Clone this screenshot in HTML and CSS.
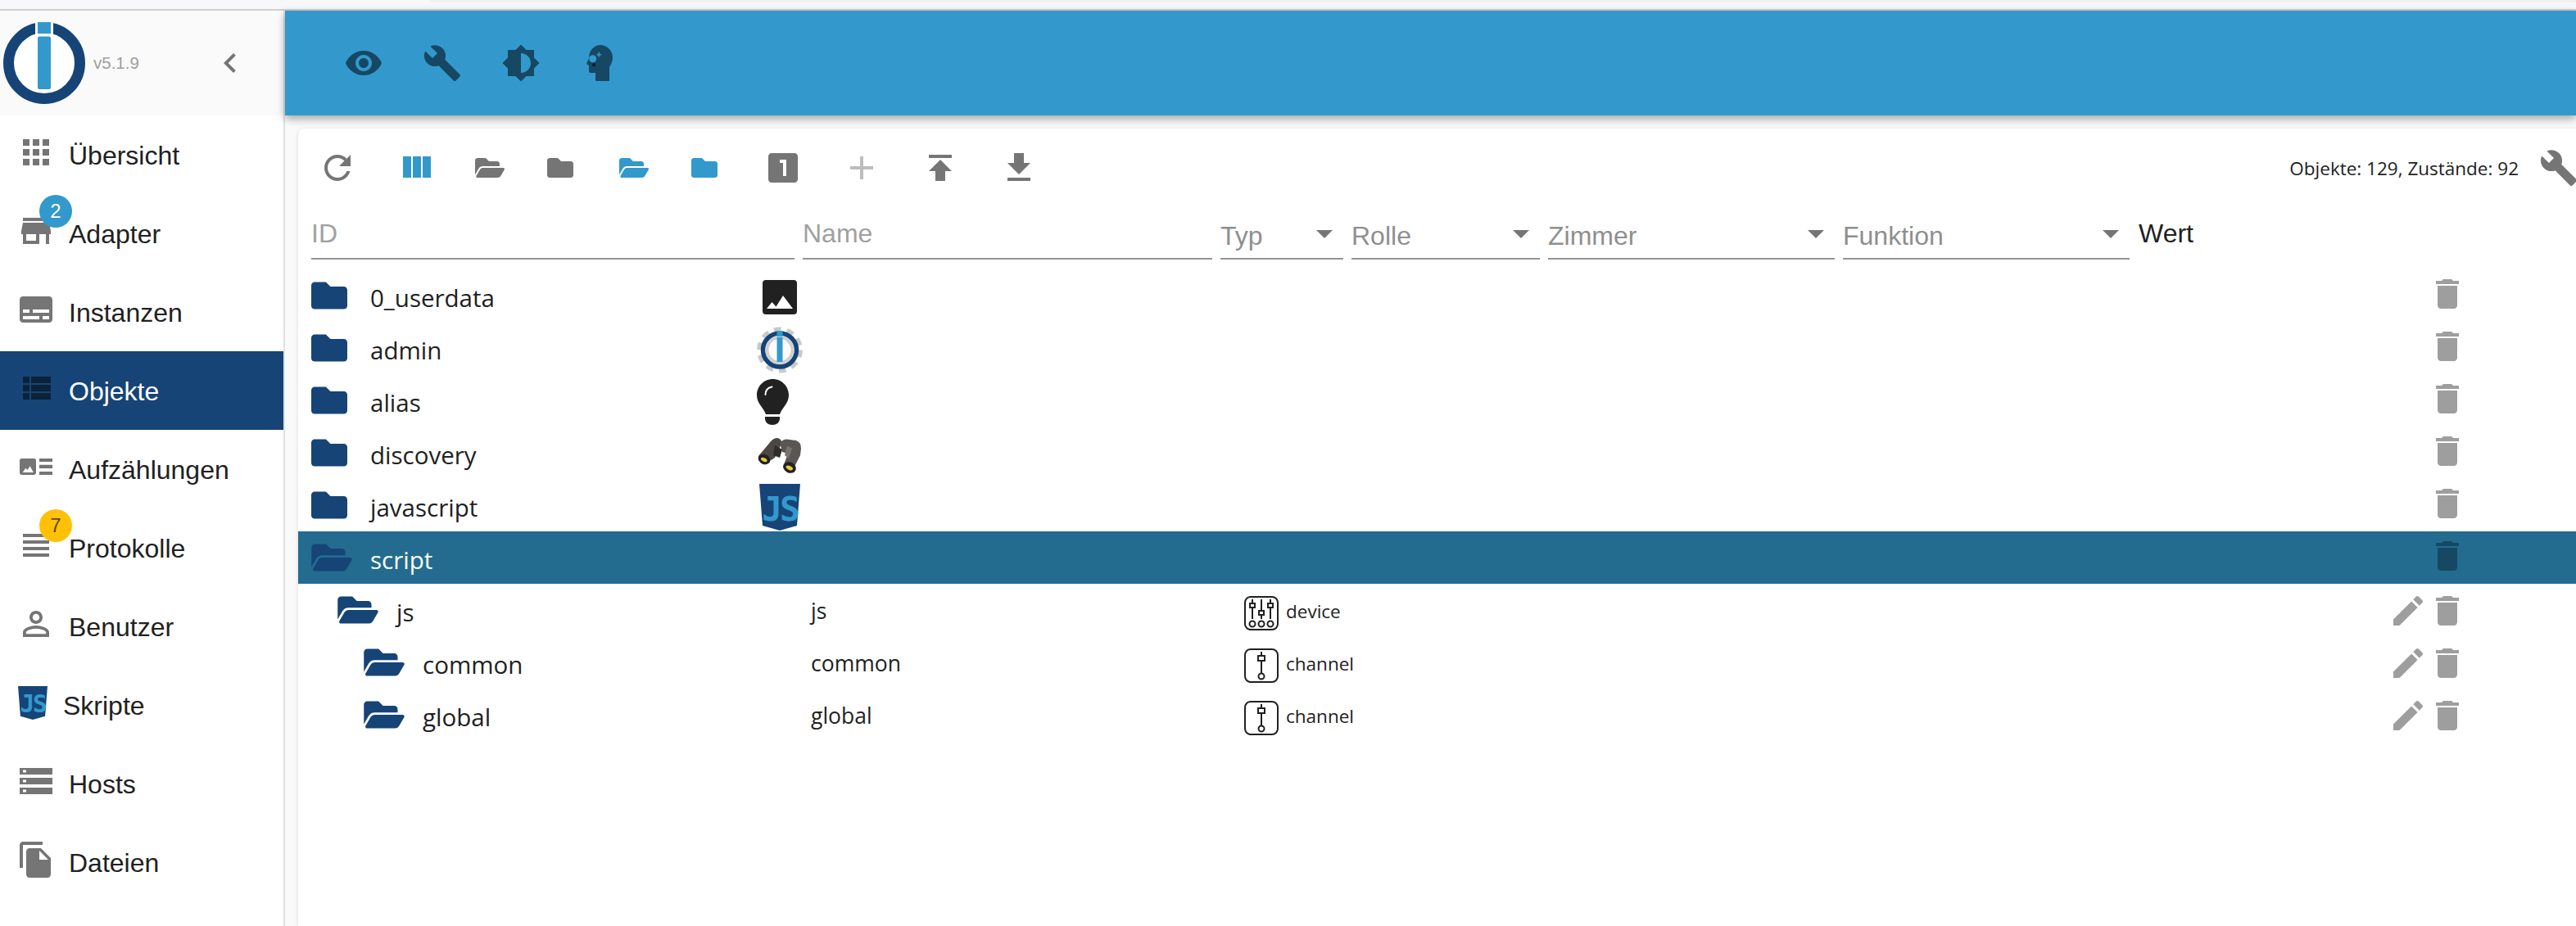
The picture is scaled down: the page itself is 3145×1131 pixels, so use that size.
FILE: index.html
```html
<!DOCTYPE html>
<html lang="de">
<head>
<meta charset="utf-8">
<title>ioBroker Objekte</title>
<link rel="stylesheet" href="styles.css">
</head>
<body>
<svg class="defs" width="0" height="0" aria-hidden="true">
  <defs>
    <path id="p-folder" d="M464 128H272l-64-64H48C21.49 64 0 85.49 0 112v288c0 26.51 21.49 48 48 48h416c26.51 0 48-21.49 48-48V176c0-26.51-21.49-48-48-48z"/>
    <path id="p-open" d="M572.694 292.093L500.27 416.248A63.997 63.997 0 0 1 444.989 448H45.025c-18.523 0-30.064-20.093-20.731-36.093l72.424-124.155A64 64 0 0 1 152 256h399.964c18.523 0 30.064 20.093 20.73 36.093zM152 224h328v-48c0-26.51-21.49-48-48-48H272l-64-64H48C21.49 64 0 85.49 0 112v278.046l69.077-118.418C86.214 242.25 117.989 224 152 224z"/>
    <path id="p-trash" d="M6 19c0 1.1.9 2 2 2h8c1.1 0 2-.9 2-2V7H6v12zM19 4h-3.5l-1-1h-5l-1 1H5v2h14V4z"/>
    <path id="p-edit" d="M3 17.25V21h3.75L17.81 9.94l-3.75-3.75L3 17.25zM20.71 7.04c.39-.39.39-1.02 0-1.41l-2.34-2.34c-.39-.39-1.02-.39-1.41 0l-1.83 1.83 3.75 3.75 1.83-1.83z"/>
    <path id="p-wrench" d="M22.7 19l-9.1-9.1c.9-2.3.4-5-1.5-6.9-2-2-5-2.4-7.4-1.3L9 6 6 9 1.6 4.7C.4 7.1.9 10.1 2.9 12.1c1.9 1.9 4.6 2.4 6.9 1.5l9.1 9.1c.4.4 1 .4 1.4 0l2.3-2.3c.5-.4.5-1.1.1-1.4z"/>
  </defs>
</svg>

<div class="browser-strip"><div class="browser-tab"></div></div>

<div class="app">
  <aside class="sidebar">
    <div class="brand">
      <svg class="logo" viewBox="0 0 100 100" width="100" height="100">
        <circle cx="50" cy="50" r="43.5" fill="#fff" stroke="#164477" stroke-width="13"/>
        <rect x="39" y="0" width="22" height="16" fill="#fafafa"/>
        <rect x="42" y="0" width="16" height="14" fill="#3399cc"/>
        <rect x="42" y="17.500" width="16" height="64.500" rx="2" fill="#3399cc"/>
      </svg>
      <span class="version">v5.1.9</span>
      <svg class="chevron" viewBox="0 0 24 24" width="48" height="48"><path d="M15.41 7.41L14 6l-6 6 6 6 1.41-1.41L10.83 12z"/></svg>
    </div>
    <nav class="menu">
      <div class="item">
        <svg class="nav-icon" viewBox="0 0 24 24"><path d="M4 8h4V4H4v4zm6 12h4v-4h-4v4zm-6 0h4v-4H4v4zm0-6h4v-4H4v4zm6 0h4v-4h-4v4zm6-10v4h4V4h-4zm-6 4h4V4h-4v4zm6 6h4v-4h-4v4zm0 6h4v-4h-4v4z"/></svg>
        <span>Übersicht</span>
      </div>
      <div class="item">
        <svg class="nav-icon" viewBox="0 0 24 24"><path d="M20 4H4v2h16V4zm1 10v-2l-1-5H4l-1 5v2h1v6h10v-6h4v6h2v-6h1zm-9 4H6v-4h6v4z"/></svg>
        <span>Adapter</span>
        <b class="badge badge-blue">2</b>
      </div>
      <div class="item">
        <svg class="nav-icon" viewBox="0 0 24 24"><path d="M20 4H4c-1.100 0-2 .9-2 2v12c0 1.100.9 2 2 2h16c1.100 0 2-.9 2-2V6c0-1.100-.9-2-2-2zM4 12h4v2H4v-2zm10 6H4v-2h10v2zm6 0h-4v-2h4v2zm0-4H10v-2h10v2z"/></svg>
        <span>Instanzen</span>
      </div>
      <div class="item item-active">
        <svg class="nav-icon" viewBox="0 0 24 24"><path d="M4 14h4v-4H4v4zm0 5h4v-4H4v4zM4 9h4V5H4v4zm5 5h12v-4H9v4zm0 5h12v-4H9v4zM9 5v4h12V5H9z"/></svg>
        <span>Objekte</span>
      </div>
      <div class="item">
        <svg class="nav-icon" viewBox="0 0 24 24"><path fill-rule="evenodd" d="M3.200 7h7.600A1.200 1.200 0 0 1 12 8.200v7.600a1.200 1.200 0 0 1-1.200 1.200H3.200A1.200 1.200 0 0 1 2 15.800V8.200A1.200 1.200 0 0 1 3.200 7zM3.800 15.500h6.600L8.300 11.600 6.800 14 5.700 12.900z"/><path d="M14 7h8v2h-8zM14 10.900h8v2.100h-8zM14 15h8v2h-8z"/></svg>
        <span>Aufzählungen</span>
      </div>
      <div class="item">
        <svg class="nav-icon" viewBox="0 0 24 24"><path d="M4 5h16v2H4zM4 9h16v2H4zM4 13h16v2H4zM4 17h16v2H4z"/></svg>
        <span>Protokolle</span>
        <b class="badge badge-amber">7</b>
      </div>
      <div class="item">
        <svg class="nav-icon" viewBox="0 0 24 24"><path d="M12 5.900c1.160 0 2.100.94 2.100 2.100s-.94 2.100-2.100 2.100S9.900 9.160 9.900 8s.94-2.100 2.100-2.100m0 9c2.970 0 6.100 1.460 6.100 2.100v1.100H5.900V17c0-.64 3.130-2.100 6.100-2.100M12 4C9.790 4 8 5.790 8 8s1.790 4 4 4 4-1.790 4-4-1.790-4-4-4zm0 9c-2.670 0-8 1.340-8 4v3h16v-3c0-2.660-5.330-4-8-4z"/></svg>
        <span>Benutzer</span>
      </div>
      <div class="item item-js">
        <svg class="js-icon js-small" viewBox="0 0 50 57"><path class="shield" d="M0 0h50l-4 51-21 6-21-6z"/><text x="25" y="45" text-anchor="middle" class="js-text">JS</text></svg>
        <span>Skripte</span>
      </div>
      <div class="item">
        <svg class="nav-icon" viewBox="0 0 24 24"><path fill-rule="evenodd" d="M2 4h20v4H2zM4 5.300v1.400h2V5.300zM2 10h20v4H2zM4 11.300v1.400h2v-1.400zM2 16h20v4H2zM4 17.300v1.400h2v-1.400z"/></svg>
        <span>Hosts</span>
      </div>
      <div class="item">
        <svg class="nav-icon" viewBox="0 0 24 24"><path d="M16 1H4c-1.100 0-2 .9-2 2v14h2V3h12V1zm-1 4l6 6v10c0 1.100-.9 2-2 2H7.990C6.890 23 6 22.100 6 21l.01-14c0-1.100.89-2 1.990-2h7zm-1 7h5.500L14 6.500V12z"/></svg>
        <span>Dateien</span>
      </div>
    </nav>
  </aside>

  <main class="content">
    <header class="appbar">
      <button class="bar-btn"><svg viewBox="0 0 24 24"><path d="M12 4.500C7 4.500 2.730 7.610 1 12c1.730 4.390 6 7.500 11 7.500s9.270-3.110 11-7.500c-1.730-4.390-6-7.500-11-7.500zM12 17c-2.760 0-5-2.240-5-5s2.240-5 5-5 5 2.240 5 5-2.240 5-5 5zm0-8c-1.660 0-3 1.340-3 3s1.340 3 3 3 3-1.340 3-3-1.340-3-3-3z"/></svg></button>
      <button class="bar-btn"><svg viewBox="0 0 24 24"><use href="#p-wrench"/></svg></button>
      <button class="bar-btn"><svg viewBox="0 0 24 24"><path fill-rule="evenodd" d="M20 15.310L23.310 12 20 8.690V4h-4.690L12 .69 8.690 4H4v4.690L.69 12 4 15.310V20h4.690L12 23.310 15.310 20H20v-4.690zM12 18V6c3.310 0 6 2.690 6 6s-2.690 6-6 6z"/></svg></button>
      <button class="bar-btn"><svg viewBox="0 0 48 48"><path d="M20 46a1 1 0 0 1-1-1v-9h-6a2 2 0 0 1-2-2v-7l-3-2 3-7C11 8 18 2 25 2c8 0 15 7 15 15 0 5-2 9-4 12v16a1 1 0 0 1-1 1z"/><circle cx="15.700" cy="18.700" r="4.500" fill="#3399cc"/><path d="M22.500 11h1.600v2h2v1.600h-2v2h-1.600v-2h-2V13h2z" fill="#3399cc"/><circle cx="17" cy="26.300" r="2" fill="#0a2030"/></svg></button>
    </header>

    <section class="paper">
      <div class="toolbar">
        <button class="tool"><svg viewBox="0 0 24 24"><path d="M17.650 6.350C16.200 4.900 14.210 4 12 4c-4.420 0-7.990 3.580-7.990 8s3.570 8 7.990 8c3.730 0 6.840-2.550 7.730-6h-2.080c-.82 2.330-3.040 4-5.650 4-3.310 0-6-2.690-6-6s2.690-6 6-6c1.660 0 3.140.69 4.220 1.780L13 11h7V4l-2.350 2.350z"/></svg></button>
        <button class="tool tool-blue"><svg viewBox="0 0 24 24"><path d="M10 18h5V5h-5v13zm-6 0h5V5H4v13zM16 5v13h5V5h-5z"/></svg></button>
        <button class="tool tool-folder shift-a"><svg class="open-t" viewBox="0 0 576 512"><use href="#p-open"/></svg></button>
        <button class="tool tool-folder shift-b"><svg class="closed-t" viewBox="0 0 512 512"><use href="#p-folder"/></svg></button>
        <button class="tool tool-folder tool-blue shift-a"><svg class="open-t" viewBox="0 0 576 512"><use href="#p-open"/></svg></button>
        <button class="tool tool-folder tool-blue shift-b"><svg class="closed-t" viewBox="0 0 512 512"><use href="#p-folder"/></svg></button>
        <button class="tool"><svg viewBox="0 0 24 24"><path d="M19 3H5c-1.100 0-2 .9-2 2v14c0 1.100.9 2 2 2h14c1.100 0 2-.9 2-2V5c0-1.100-.9-2-2-2zm-5 14h-2V9h-2V7h4v10z"/></svg></button>
        <button class="tool tool-off"><svg viewBox="0 0 24 24"><path d="M19 13h-6v6h-2v-6H5v-2h6V5h2v6h6v2z"/></svg></button>
        <button class="tool"><svg viewBox="0 0 24 24"><path d="M5 4v2h14V4H5zm0 10h4v6h6v-6h4l-7-7-7 7z"/></svg></button>
        <button class="tool"><svg viewBox="0 0 24 24"><path d="M19 9h-4V3H9v6H5l7 7 7-7zM5 18v2h14v-2H5z"/></svg></button>
        <span class="stats">Objekte: 129, Zustände: 92</span>
        <button class="tool-wrench"><svg viewBox="0 0 24 24"><use href="#p-wrench"/></svg></button>
      </div>

      <div class="filters">
        <div class="field w-id"><span>ID</span></div>
        <div class="field w-name"><span>Name</span></div>
        <div class="field select w-typ"><span>Typ</span><i></i></div>
        <div class="field select w-rolle"><span>Rolle</span><i></i></div>
        <div class="field select w-wide"><span>Zimmer</span><i></i></div>
        <div class="field select w-wide"><span>Funktion</span><i></i></div>
        <div class="wert">Wert</div>
      </div>

      <div class="rows">
        <div class="row">
          <div class="cell-id"><svg class="f-closed" viewBox="0 0 512 512"><use href="#p-folder"/></svg><span>0_userdata</span>
            <div class="row-icon"><svg width="42" height="42" viewBox="0 0 42 42"><rect width="42" height="42" rx="4" fill="#212121"/><path d="M5 35l6.500-8 5 5.500L25 19l12 16z" fill="#fff"/></svg></div></div>
          <div></div><div></div>
          <div class="actions"><button class="act"><svg viewBox="0 0 24 24"><use href="#p-trash"/></svg></button></div>
        </div>
        <div class="row">
          <div class="cell-id"><svg class="f-closed" viewBox="0 0 512 512"><use href="#p-folder"/></svg><span>admin</span>
            <div class="row-icon"><svg width="56" height="57" viewBox="0 0 56 57">
              <circle cx="28" cy="28.500" r="23" fill="none" stroke="#c9c9c9" stroke-width="10" stroke-dasharray="8 6.450"/>
              <circle cx="28" cy="28.500" r="21" fill="#dcdcdc"/>
              <circle cx="28" cy="28.500" r="20.500" fill="#fff" stroke="#164477" stroke-width="5.500"/>
              <circle cx="28" cy="28.500" r="15.500" fill="none" stroke="#cfcfcf" stroke-width="4"/>
              <rect x="24.500" y="5" width="7" height="7" fill="#3399cc"/><rect x="24.500" y="13" width="7" height="30" fill="#3399cc"/>
            </svg></div></div>
          <div></div><div></div>
          <div class="actions"><button class="act"><svg viewBox="0 0 24 24"><use href="#p-trash"/></svg></button></div>
        </div>
        <div class="row">
          <div class="cell-id"><svg class="f-closed" viewBox="0 0 512 512"><use href="#p-folder"/></svg><span>alias</span>
            <div class="row-icon"><svg class="bulb" width="39" height="56" viewBox="0 0 39 56"><path d="M19.500 0C30.300 0 39 8.700 39 19.500c0 4.500-1.500 8.100-3.900 11.800C32 36 29.500 39 28 43H11C9.500 39 7 36 3.900 31.300 1.500 27.600 0 24 0 19.500 0 8.700 8.700 0 19.500 0z" fill="#212121"/><path d="M10 46h18v2c0 5-4 8-9 8s-9-3-9-8z" fill="#212121"/><path d="M10.500 19c0-5 3-8.500 8-9.500" fill="none" stroke="#fff" stroke-width="2" stroke-linecap="round"/></svg></div></div>
          <div></div><div></div>
          <div class="actions"><button class="act"><svg viewBox="0 0 24 24"><use href="#p-trash"/></svg></button></div>
        </div>
        <div class="row">
          <div class="cell-id"><svg class="f-closed" viewBox="0 0 512 512"><use href="#p-folder"/></svg><span>discovery</span>
            <div class="row-icon"><svg width="54" height="47" viewBox="0 0 54 47">
              <path d="M1 25L17 6Q22 1 27 4L30 8 21 27 10 34Q2 33 1 25z" fill="#4a4745"/>
              <path d="M27 9Q32 3 39 5L47 6Q53 8 53 16L52 24 42 44Q34 45 31 38L37 22 30 20z" fill="#5a5654"/>
              <path d="M21 12L30 17 27 27 19 24z" fill="#2e2c2b"/>
              <path d="M36 12L42 16 38 28 33 24z" fill="#777371"/>
              <ellipse cx="8" cy="29" rx="7.500" ry="6" fill="#222" transform="rotate(25 8 29)"/>
              <ellipse cx="8" cy="29.500" rx="4" ry="2.200" fill="#e8cc3a" transform="rotate(25 8 29)"/>
              <ellipse cx="39" cy="39" rx="8" ry="6.500" fill="#222" transform="rotate(25 39 39)"/>
              <ellipse cx="39" cy="39.500" rx="4.500" ry="2.400" fill="#e8cc3a" transform="rotate(25 39 39)"/>
            </svg></div></div>
          <div></div><div></div>
          <div class="actions"><button class="act"><svg viewBox="0 0 24 24"><use href="#p-trash"/></svg></button></div>
        </div>
        <div class="row">
          <div class="cell-id"><svg class="f-closed" viewBox="0 0 512 512"><use href="#p-folder"/></svg><span>javascript</span>
            <div class="row-icon"><svg class="js-icon" width="50" height="57" viewBox="0 0 50 57"><path class="shield" d="M0 0h50l-4 51-21 6-21-6z"/><text x="25" y="45" text-anchor="middle" class="js-text">JS</text></svg></div></div>
          <div></div><div></div>
          <div class="actions"><button class="act"><svg viewBox="0 0 24 24"><use href="#p-trash"/></svg></button></div>
        </div>
        <div class="row row-selected">
          <div class="cell-id"><svg class="f-open" viewBox="0 0 576 512"><use href="#p-open"/></svg><span>script</span></div>
          <div></div><div></div>
          <div class="actions"><button class="act"><svg viewBox="0 0 24 24"><use href="#p-trash"/></svg></button></div>
        </div>
        <div class="row row-child">
          <div class="cell-id depth-1"><svg class="f-open" viewBox="0 0 576 512"><use href="#p-open"/></svg><span>js</span></div>
          <div class="cell-name">js</div>
          <div class="cell-type"><svg width="42" height="42" viewBox="0 0 42 42"><rect x="1" y="1" width="40" height="40" rx="7"/><path d="M10 4v24M21 4v24M32 4v24"/><rect class="knob" x="7" y="9" width="6" height="5"/><rect class="knob" x="18" y="18" width="6" height="5"/><rect class="knob" x="29" y="9" width="6" height="5"/><circle cx="10" cy="34" r="3.500"/><circle cx="21" cy="34" r="3.500"/><circle cx="32" cy="34" r="3.500"/></svg><span>device</span></div>
          <div class="actions"><button class="act"><svg viewBox="0 0 24 24"><use href="#p-edit"/></svg></button><button class="act"><svg viewBox="0 0 24 24"><use href="#p-trash"/></svg></button></div>
        </div>
        <div class="row row-child">
          <div class="cell-id depth-2"><svg class="f-open" viewBox="0 0 576 512"><use href="#p-open"/></svg><span>common</span></div>
          <div class="cell-name">common</div>
          <div class="cell-type"><svg width="42" height="42" viewBox="0 0 42 42"><rect x="1" y="1" width="40" height="40" rx="7"/><path d="M21 4v26"/><rect class="knob" x="17" y="9" width="8" height="6"/><circle cx="21" cy="34" r="3.500"/></svg><span>channel</span></div>
          <div class="actions"><button class="act"><svg viewBox="0 0 24 24"><use href="#p-edit"/></svg></button><button class="act"><svg viewBox="0 0 24 24"><use href="#p-trash"/></svg></button></div>
        </div>
        <div class="row row-child">
          <div class="cell-id depth-2"><svg class="f-open" viewBox="0 0 576 512"><use href="#p-open"/></svg><span>global</span></div>
          <div class="cell-name">global</div>
          <div class="cell-type"><svg width="42" height="42" viewBox="0 0 42 42"><rect x="1" y="1" width="40" height="40" rx="7"/><path d="M21 4v26"/><rect class="knob" x="17" y="9" width="8" height="6"/><circle cx="21" cy="34" r="3.500"/></svg><span>channel</span></div>
          <div class="actions"><button class="act"><svg viewBox="0 0 24 24"><use href="#p-edit"/></svg></button><button class="act"><svg viewBox="0 0 24 24"><use href="#p-trash"/></svg></button></div>
        </div>
      </div>
    </section>
  </main>
</div>
</body>
</html>
```
FILE: styles.css
```css
* { box-sizing: border-box; }
html, body { margin: 0; height: 100%; }
body {
  width: 3145px;
  height: 1131px;
  overflow: hidden;
  display: flex;
  flex-direction: column;
  background: #fafafa;
  color: #212121;
  font-family: "Liberation Sans", Arial, sans-serif;
  font-size: 32px;
}
.defs { position: absolute; }
button { border: 0; background: none; padding: 0; display: flex; align-items: center; justify-content: center; }

.browser-strip {
  height: 13px;
  flex: none;
  background: #f8f8fa;
  border-bottom: 2px solid #cfcfcf;
}
.browser-tab {
  margin-left: 525px;
  height: 3px;
  background: #f0f0f2;
  border-bottom-left-radius: 6px;
}

.app { flex: 1; display: flex; min-height: 0; }

/* sidebar */
.sidebar {
  width: 348px;
  flex: none;
  border-right: 2px solid #e0e0e0;
  background: #fff;
  display: flex;
  flex-direction: column;
}
.brand {
  height: 128px;
  flex: none;
  background: #fafafa;
  display: flex;
  align-items: center;
  padding-left: 4px;
}
.logo { flex: none; }
.version { margin-left: 10px; font-size: 20.500px; color: #9e9e9e; }
.chevron { margin-left: auto; margin-right: 41px; fill: #757575; }

.item {
  position: relative;
  height: 96px;
  display: flex;
  align-items: center;
  padding-left: 20px;
}
.item > span { margin-top: 2px; }
.nav-icon {
  width: 48px;
  height: 48px;
  margin-right: 16px;
  margin-bottom: 6px;
  fill: #757575;
  flex: none;
}
.item-active { background: #164477; color: #fff; }
.item-active .nav-icon { fill: #0b2239; }
.item-js { padding-left: 22px; }
.js-small { width: 36px; height: 41px; margin-right: 19px; margin-bottom: 6px; flex: none; }
.shield { fill: #164477; }
.js-text { font-family: "DejaVu Sans Mono", monospace; font-weight: 700; font-size: 41px; fill: #3399cc; letter-spacing: -3px; }
.badge {
  position: absolute;
  left: 48px;
  top: 1px;
  width: 40px;
  height: 40px;
  border-radius: 50%;
  display: flex;
  align-items: center;
  justify-content: center;
  font-weight: 400;
  font-size: 24px;
}
.badge-blue { background: #3399cc; color: #fff; }
.badge-amber { background: #ffc107; color: #5f4a0a; }

/* main */
.content { flex: 1; min-width: 0; display: flex; flex-direction: column; }
.appbar {
  height: 128px;
  flex: none;
  background: #3399cc;
  box-shadow: 0 4px 10px rgba(0, 0, 0, .35);
  display: flex;
  align-items: center;
  padding-left: 48px;
  position: relative;
}
.bar-btn { width: 96px; height: 96px; }
.bar-btn svg { width: 48px; height: 48px; fill: #164863; }

.paper {
  flex: 1;
  min-height: 0;
  margin: 16px 0 0 16px;
  background: #fff;
  border-radius: 8px 0 0 0;
  box-shadow: 0 1px 4px rgba(0, 0, 0, .14);
  overflow: hidden;
}

.toolbar { height: 96px; display: flex; align-items: center; }
.tool { width: 96px; height: 96px; flex: none; }
.tool svg { width: 48px; height: 48px; fill: #757575; }
.tool-folder { width: 88px; }
.tool-folder svg.closed-t { width: 32px; height: 32px; }
.tool-folder svg.open-t { width: 36px; height: 32px; }
.shift-a { padding-right: 4px; }
.shift-b { padding-right: 8px; }
.tool-blue svg { fill: #3399cc; }
.tool-off svg { fill: #bdbdbd; }
.stats {
  margin-left: auto;
  margin-right: 25px;
  font-family: "Open Sans", sans-serif;
  font-size: 22.500px;
  color: #212121;
}
.tool-wrench { width: 48px; height: 48px; flex: none; margin-right: -3px; }
.tool-wrench svg { width: 48px; height: 48px; fill: #757575; }

.filters {
  height: 64px;
  margin-bottom: 12px;
  padding-left: 16px;
  display: flex;
  gap: 10px;
  align-items: stretch;
}
.field {
  border-bottom: 2px solid #949494;
  display: flex;
  align-items: flex-end;
  color: #a0a0a0;
  flex: none;
}
.field span { padding-bottom: 11px; line-height: 37px; }
.select { color: #8f8f8f; justify-content: space-between; padding-right: 13px; }
.select span { padding-bottom: 8px; }
.select i {
  width: 0;
  height: 0;
  margin-bottom: 24px;
  border-left: 10.500px solid transparent;
  border-right: 10.500px solid transparent;
  border-top: 10px solid #757575;
}
.w-id { width: 590px; }
.w-name { width: 500px; }
.w-typ { width: 150px; }
.w-rolle { width: 230px; }
.w-wide { width: 350px; }
.wert { align-self: flex-end; line-height: 37px; padding-bottom: 13px; margin-left: 1px; }

.row {
  height: 64px;
  display: grid;
  grid-template-columns: 616px 510px 1fr auto;
  align-items: center;
  font-family: "Open Sans", sans-serif;
  font-size: 29.500px;
}
.cell-id { display: flex; align-items: center; padding-left: 16px; height: 64px; }
.cell-id > span { line-height: 40px; margin-top: 5px; }
.depth-1 { padding-left: 48px; }
.depth-2 { padding-left: 80px; }
.f-closed { width: 44px; height: 44px; margin-right: 28px; fill: #164477; flex: none; margin-bottom: 1px; }
.f-open { width: 50px; height: 44px; margin-right: 22px; fill: #164477; flex: none; margin-bottom: 1px; }
.row-child .f-open { margin-bottom: 0; }
.row-icon {
  margin-left: auto;
  width: 56px;
  display: flex;
  justify-content: center;
  margin-top: 4px;
}
.bulb { margin-right: 17px; }
.row-selected { background: #236c8f; color: #fff; }
.row-selected .act svg { fill: #164863; }
.cell-name { padding-left: 10px; margin-top: 2px; font-size: 26.500px; }
.cell-type { padding-left: 29px; display: flex; align-items: center; gap: 9px; font-size: 22.500px; margin-top: 8px; }
.cell-type svg { fill: none; stroke: #212121; stroke-width: 2; flex: none; }
.cell-type .knob { fill: #fff; }
.cell-type span { margin-top: -6px; }
.actions { display: flex; padding-right: 133px; margin-bottom: 4px; }
.row-child .actions { margin-bottom: 0; margin-top: 2px; }
.act { width: 48px; height: 48px; }
.act svg { width: 48px; height: 48px; fill: #9e9e9e; }
```
